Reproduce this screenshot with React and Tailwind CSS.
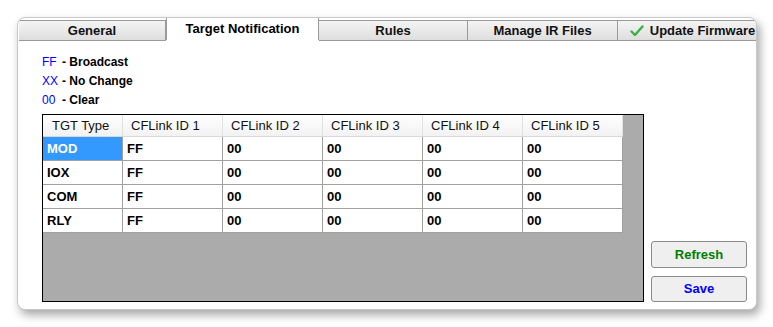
import React from "react";

const tabs = [
  { name: "General", w: "w-[147px]" },
  { name: "Target Notification", w: "w-[153px]", active: true },
  { name: "Rules", w: "w-[149px]" },
  { name: "Manage IR Files", w: "w-[150px]" },
  { name: "Update Firmware", w: "w-[150px]", check: true },
];

const legend = [
  { code: "FF", label: "- Broadcast" },
  { code: "XX", label: "- No Change" },
  { code: "00", label: "- Clear" },
];

const headers = ["TGT Type", "CFLink ID 1", "CFLink ID 2", "CFLink ID 3", "CFLink ID 4", "CFLink ID 5"];
const rows = ["MOD", "IOX", "COM", "RLY"];

function Check() {
  return (
    <svg width="14" height="12" viewBox="0 0 14 12" className="shrink-0">
      <path d="M1.5 6.5 L5 10 L12.5 1.5" fill="none" stroke="#3cb043" strokeWidth="2.4" strokeLinecap="round" strokeLinejoin="round" />
    </svg>
  );
}

export default function App() {
  return (
    <div className="w-[773px] h-[327px] bg-white pt-[17px] pl-[17px] font-['Liberation_Sans',Arial,sans-serif] text-[13px] text-black">
      <div className="w-[740px] h-[293px] rounded-[8px] border border-[#c8c8c8] bg-white shadow-[3px_5px_10px_rgba(0,0,0,0.35)] overflow-hidden flex flex-col">
        {/* Tabs */}
        <div className="flex h-[23px] shrink-0 pl-px">
          {tabs.map((t) =>
            t.active ? (
              <div
                key={t.name}
                className={`${t.w} h-[23px] -mt-px shrink-0 flex items-start justify-center pt-[1px] bg-white border border-b-0 border-[#9a9a9a] font-bold text-[13px] text-black`}
              >
                {t.name}
              </div>
            ) : (
              <div key={t.name} className="flex flex-col justify-end shrink-0">
                <div
                  className={`${t.w} h-[21px] flex items-center justify-center gap-[6px] bg-gradient-to-b from-[#f4f4f4] to-[#dedede] border border-[#9a9a9a] border-l-0 font-bold text-[13px] text-[#111]`}
                >
                  {t.check && <Check />}
                  <span className="whitespace-nowrap">{t.name}</span>
                </div>
              </div>
            )
          )}
        </div>

        {/* Content */}
        <div className="flex flex-col pl-[24px] pt-[11px]">
          <div className="flex flex-col text-[12px] font-bold">
            {legend.map((l) => (
              <div key={l.code} className="h-[19px] flex items-center">
                <span className="w-[20px] text-[#0000ff] font-normal">{l.code}</span>
                <span>{l.label}</span>
              </div>
            ))}
          </div>

          <div className="flex mt-[5px] gap-[7px]">
            {/* Table */}
            <div className="w-[602px] h-[188px] border border-black bg-[#ababab] text-[13px]">
              <div className="flex w-[580px] h-[22px] bg-gradient-to-b from-white to-[#f2f2f2] border-b border-[#d8d8d8]">
                {headers.map((h, i) => (
                  <div
                    key={h}
                    className={`${i === 0 ? "w-[80px] pl-[9px]" : "w-[100px] pl-[8px]"} flex items-center border-r border-[#e2e2e2] text-[#111]`}
                  >
                    {h}
                  </div>
                ))}
              </div>
              {rows.map((r, ri) => (
                <div key={r} className="flex w-[580px] h-[24px] bg-white border-b border-[#a0a0a0] font-bold">
                  <div
                    className={`w-[80px] pl-[4px] flex items-center border-r border-[#a0a0a0] ${ri === 0 ? "bg-[#3399ff] text-white" : ""}`}
                  >
                    {r}
                  </div>
                  {[0, 1, 2, 3, 4].map((c) => (
                    <div key={c} className="w-[100px] pl-[4px] flex items-center border-r border-[#a0a0a0]">
                      {c === 0 ? "FF" : "00"}
                    </div>
                  ))}
                </div>
              ))}
            </div>

            {/* Buttons */}
            <div className="flex flex-col justify-end gap-[8px]">
              <button className="w-[96px] h-[27px] rounded-[3px] border border-[#8a8a8a] bg-[#efefef] text-[13px] font-bold text-[#008000]">
                Refresh
              </button>
              <button className="w-[96px] h-[26px] rounded-[3px] border border-[#8a8a8a] bg-[#efefef] text-[13px] font-bold text-[#0000ff]">
                Save
              </button>
            </div>
          </div>
        </div>
      </div>
    </div>
  );
}
